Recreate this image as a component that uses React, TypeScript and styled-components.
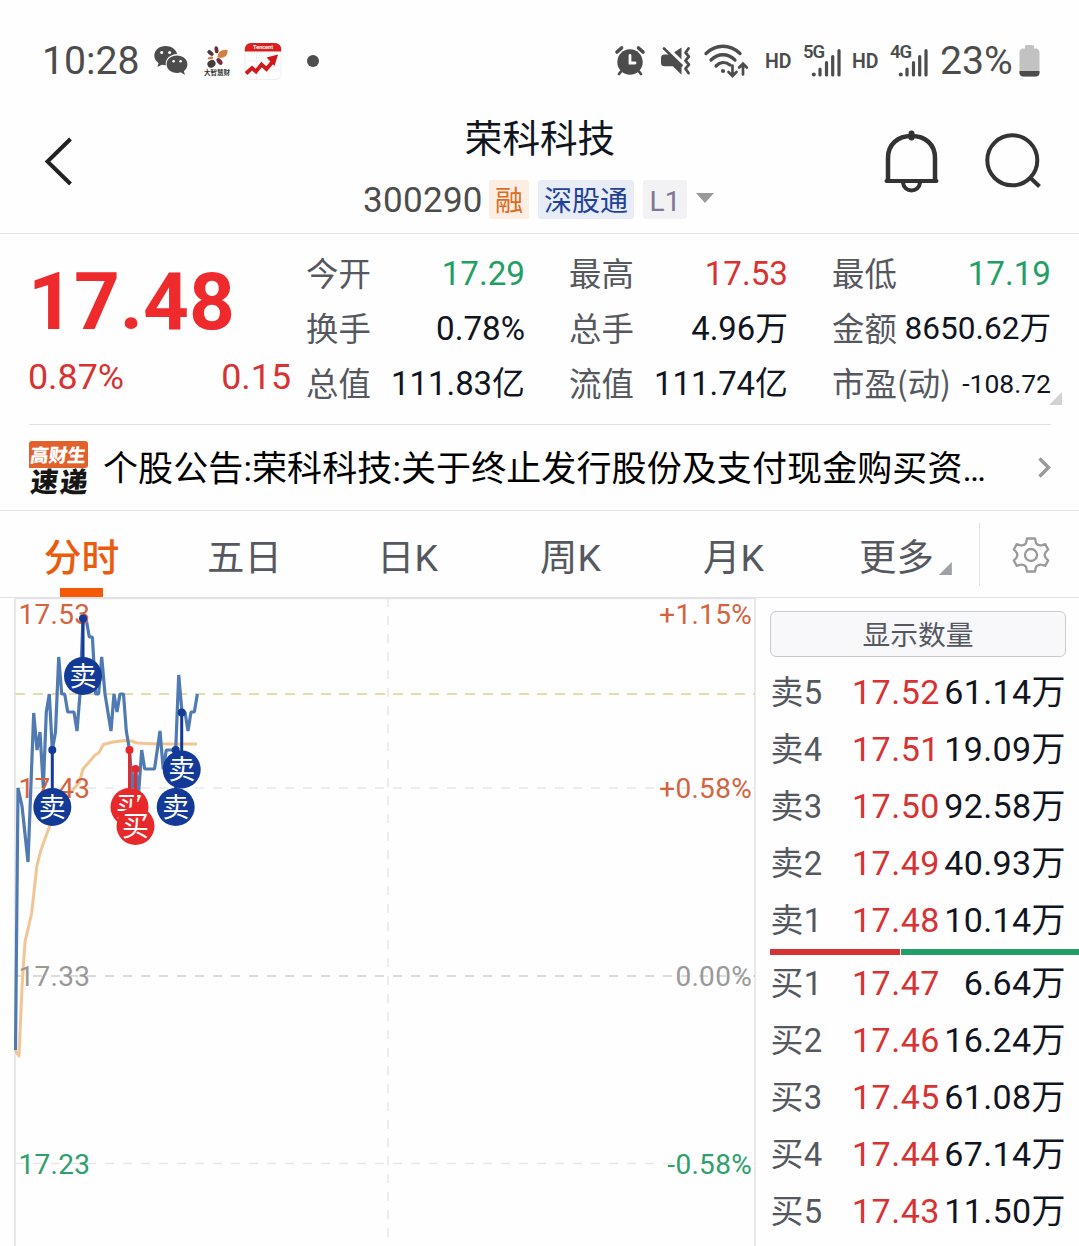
import React from "react";
import styled, { createGlobalStyle } from "styled-components";

const RED = "#d83232";
const BIG_RED = "#ee2a2c";
const GREEN = "#22a064";
const INK = "#10151f";
const GREY = "#55585f";
const LINE = "#e2e2e4";

const Global = createGlobalStyle`
  * { box-sizing: border-box; }
  body {
    margin: 0;
    background: #fefefe;
    font-family: Roboto, "Noto Sans CJK SC", sans-serif;
    color: ${INK};
  }
`;

const Screen = styled.div`
  width: 1079px;
  height: 1246px;
  overflow: hidden;
  display: flex;
  flex-direction: column;
`;

/* ---------- status bar ---------- */

const StatusBar = styled.div`
  height: 105px;
  flex: none;
  padding: 17px 39px 0 42px;
  display: flex;
  justify-content: space-between;
  align-items: center;
  color: #4c4c4c;
`;

const StatusGroup = styled.div`
  display: flex;
  align-items: center;
`;

const StatusText = styled.span<{ $w: number }>`
  width: ${(p) => p.$w}px;
  font-size: 39.2px;
  line-height: 44px;
  white-space: nowrap;
`;

const Hd = styled.span<{ $w: number }>`
  width: ${(p) => p.$w}px;
  padding-top: 1px;
  font-size: 19.5px;
  font-weight: 600;
  line-height: 22px;
`;

const Icon = styled.svg<{ $gap?: number }>`
  display: block;
  flex: none;
  overflow: visible;
  margin-right: ${(p) => p.$gap ?? 0}px;
`;

function WeChat() {
  return (
    <Icon $gap={16} width="34" height="32" viewBox="0 0 34 32" fill="#4c4c4c">
      <path d="M11.5 1C5.2 1 .3 5.200.3 10.600c0 3 1.600 5.700 4.200 7.500l-1 4 4.400-2.300c1.200.3 2.500.5 3.900.5-.9-6 4.200-11.200 11.400-11.200C22 4.400 17.400 1 11.500 1z" />
      <path d="M23 10.500c-5.800 0-10.400 3.800-10.400 8.700s4.600 8.700 10.400 8.700c1.300 0 2.600-.2 3.700-.6l4.200 2.700-1-3.900c2.100-1.600 3.500-4 3.500-6.900 0-4.900-4.600-8.700-10.400-8.700z" />
      <g fill="#fefefe">
        <circle cx="7.700" cy="7.500" r="1.500" />
        <circle cx="15.600" cy="7.500" r="1.500" />
        <circle cx="19.600" cy="16.300" r="1.300" />
        <circle cx="26.600" cy="16.300" r="1.300" />
      </g>
    </Icon>
  );
}

function Flower() {
  return (
    <Icon $gap={14} width="26" height="30" viewBox="0 0 26 30">
      <ellipse cx="12.500" cy="3.800" rx="1.900" ry="3.600" transform="rotate(-10 12.500 3.800)" fill="#6b2a38" />
      <ellipse cx="6.500" cy="7" rx="3.600" ry="2" transform="rotate(40 6.500 7)" fill="#4a3a3a" />
      <path d="M13.500 11.500C13.500 6 18 3 23.500 4c.5 5.500-3 9-10 7.500z" fill="#d08040" />
      <ellipse cx="6.500" cy="12" rx="2.900" ry="1.400" transform="rotate(-12 6.500 12)" fill="#d08040" />
      <ellipse cx="15.500" cy="15.500" rx="3.800" ry="2.300" transform="rotate(50 15.500 15.500)" fill="#7b2a3c" />
      <ellipse cx="7.500" cy="17.800" rx="4.200" ry="3.600" transform="rotate(-30 7.500 17.800)" fill="#443d3d" />
      <text x="0" y="29" fontSize="6.500" fontWeight="700" fill="#333" fontFamily='"Noto Sans CJK SC", sans-serif'>
        大智慧财
      </text>
    </Icon>
  );
}

function TencentStock() {
  return (
    <Icon $gap={25} width="38" height="38" viewBox="0 0 38 38">
      <rect x="1" y="1.500" width="36" height="36" rx="6" fill="#fff" stroke="#eee" />
      <path d="M12.500 10v27M25 10v27M1 19h36M1 28h36" stroke="#f1f1f1" />
      <path d="M.8 9.500V7a6 6 0 0 1 6-6h24.400a6 6 0 0 1 6 6v2.500z" fill="#d9201d" />
      <text x="19" y="7.400" fontSize="5.500" fontWeight="700" textAnchor="middle" fill="#fff">Tencent</text>
      <path d="M2 31.500l6-5.500 4 3.500 5.500-7 5 4.500 8-9.500" fill="none" stroke="#cf1a1a" strokeWidth="3.800" />
      <path d="M22.500 15.500l11.500-3-3.500 11.500z" fill="#cf1a1a" />
    </Icon>
  );
}

const Dot = styled.i`
  width: 12px;
  height: 12px;
  border-radius: 50%;
  background: #4c4c4c;
`;

function Alarm() {
  return (
    <Icon $gap={16} width="30" height="30" viewBox="0 0 30 30" fill="none" stroke="#4c4c4c" strokeLinecap="round">
      <circle cx="15" cy="16" r="12.700" fill="#4c4c4c" stroke="none" />
      <path d="M2 6l4.500-4M28 6l-4.500-4" strokeWidth="3.600" />
      <path d="M6 25.500l-2 2.500M24 25.500l2 2.500" strokeWidth="2.800" />
      <path d="M15 9.500v7.500h5" stroke="#fefefe" strokeWidth="2.800" />
    </Icon>
  );
}

function Mute() {
  return (
    <Icon $gap={12} width="31" height="32" viewBox="0 0 31 32" fill="#4c4c4c">
      <path d="M20.500 2.500v12l-7.300-7.200z" />
      <path d="M3.500 9.500h5l12 12v8.300l-8.500-8.500H3.500A3.500 3.500 0 0 1 0 18v-5a3.500 3.500 0 0 1 3.500-3.500z" />
      <path d="M3 3.500l17.500 17" stroke="#4c4c4c" strokeWidth="2.600" strokeLinecap="round" />
      <path d="M27.500 3.500l-3 4.200 3.400 4-3.400 4 3.400 4-3.400 4 3 4.300" fill="none" stroke="#4c4c4c" strokeWidth="2.800" strokeLinejoin="round" strokeLinecap="round" />
    </Icon>
  );
}

function Wifi() {
  return (
    <Icon $gap={17} width="44" height="36" viewBox="0 0 44 36" fill="none" stroke="#4c4c4c" strokeWidth="3.300" strokeLinecap="round">
      <path d="M2 10.500C12 .8 26 .8 36 10.500" />
      <path d="M7 17c7-7 17-7 24 0" />
      <path d="M12 23c4-4 9.500-4.500 14-1" />
      <circle cx="19" cy="28" r="2.100" fill="#4c4c4c" stroke="none" />
      <path d="M28.500 22.500v10M24.500 29l4 4 4-4M39 31.500v-10M35.200 24.500l3.800-3.800 3.800 3.800" strokeWidth="2.700" />
    </Icon>
  );
}

function Signal({ label, gap }: { label: string; gap: number }) {
  return (
    <Icon $gap={gap} width="38" height="34" viewBox="0 0 38 34">
      <text x="0" y="14" fontSize="18.500" fontWeight="600" fill="#4c4c4c" textLength="22">{label}</text>
      <path d="M17 31v-6M23.500 31v-12.500M29.700 31v-18.500M36 31v-24.500" stroke="#4c4c4c" strokeWidth="3.200" strokeLinecap="round" />
      <circle cx="10.800" cy="30.500" r="2" fill="#4c4c4c" />
    </Icon>
  );
}

function Battery() {
  return (
    <Icon width="21" height="32" viewBox="0 0 21 32">
      <path d="M6 1.500q0-1.500 1.500-1.500h6q1.500 0 1.500 1.500V3.500h2.500Q20.500 4 20.500 8v19.500q0 4-4 4h-12q-4 0-4-4V8q0-4 3-4.500H6z" fill="#c2c2c2" />
      <path d="M.5 26h20v1.500q0 4-4 4h-12q-4 0-4-4z" fill="#4c4c4c" />
    </Icon>
  );
}

/* ---------- header ---------- */

const Header = styled.header`
  height: 129px;
  flex: none;
  display: flex;
  justify-content: space-between;
  border-bottom: 1px solid ${LINE};
`;

const HeaderSide = styled.div<{ $end?: boolean }>`
  width: 240px;
  padding: ${(p) => (p.$end ? "24px 37px 0 0" : "31px 0 0 43px")};
  display: flex;
  align-items: flex-start;
  justify-content: ${(p) => (p.$end ? "flex-end" : "flex-start")};
`;

const Titles = styled.div`
  padding-top: 6px;
  display: flex;
  flex-direction: column;
  align-items: center;
  gap: 12px;
`;

const StockName = styled.h1`
  margin: 0;
  padding-left: 1px;
  font-size: 37.6px;
  line-height: 56px;
  font-weight: 400;
`;

const CodeRow = styled.div`
  height: 40px;
  margin-right: 2px;
  display: flex;
  align-items: center;
  gap: 9px;
`;

const Code = styled.span`
  width: 117px;
  padding-top: 3px;
  font-size: 35px;
  line-height: 40px;
  letter-spacing: 0.3px;
  color: #4c4c4c;
`;

const Tag = styled.span<{ $bg: string; $fg: string; $w: number }>`
  width: ${(p) => p.$w}px;
  height: 39px;
  border-radius: 3px;
  font-size: 28px;
  line-height: 43px;
  text-align: center;
  color: ${(p) => p.$fg};
  background: ${(p) => p.$bg};
`;

const Caret = styled.i`
  border: 9px solid transparent;
  border-top: 10px solid #999;
  border-bottom: 0;
  margin-top: -3px;
`;

/* ---------- quote ---------- */

const Quote = styled.section`
  height: 191px;
  flex: none;
  margin: 0 28px 0 29px;
  border-bottom: 1px solid ${LINE};
  display: flex;
  gap: 15px;
  position: relative;
`;

const PriceBlock = styled.div`
  width: 263px;
  padding-top: 23px;
`;

const Price = styled.div`
  margin-left: -1px;
  font-size: 80px;
  line-height: 90px;
  font-weight: 700;
  color: ${BIG_RED};
`;

const Change = styled.div`
  display: flex;
  justify-content: space-between;
  margin: 8px 0 0 -1px;
  font-size: 35.8px;
  line-height: 44px;
  color: ${RED};
`;

const Stats = styled.div`
  flex: 1;
  padding-top: 12px;
  display: grid;
  grid-template-columns: repeat(3, 219px);
  grid-auto-rows: 55px;
  column-gap: 44px;
`;

const Stat = styled.div`
  display: flex;
  justify-content: space-between;
  align-items: center;
  white-space: nowrap;
  line-height: 54px;
`;

const StatLabel = styled.span`
  padding-bottom: 4px;
  font-family: "Noto Sans CJK SC", sans-serif;
  font-size: 32.4px;
  line-height: 50px;
  color: ${GREY};
`;

const StatValue = styled.b<{ $tone?: string; $size?: number }>`
  font-weight: 400;
  font-size: ${(p) => p.$size ?? 33.2}px;
  color: ${(p) => p.$tone ?? INK};
`;

const Corner = styled.i<{ $size: number; $color: string }>`
  width: ${(p) => p.$size}px;
  height: ${(p) => p.$size}px;
  background: ${(p) => p.$color};
  clip-path: polygon(100% 0, 100% 100%, 0 100%);
`;

const QuoteCorner = styled(Corner)`
  position: absolute;
  right: -11px;
  bottom: 19px;
`;

const stats: { label: string; value: string; tone?: string; size?: number }[] = [
  { label: "今开", value: "17.29", tone: GREEN },
  { label: "最高", value: "17.53", tone: RED },
  { label: "最低", value: "17.19", tone: GREEN },
  { label: "换手", value: "0.78%" },
  { label: "总手", value: "4.96万", size: 32.8 },
  { label: "金额", value: "8650.62万", size: 31.6 },
  { label: "总值", value: "111.83亿", size: 32.9 },
  { label: "流值", value: "111.74亿", size: 32.9 },
  { label: "市盈(动)", value: "-108.72", size: 26.5 },
];

/* ---------- news ---------- */

const News = styled.section`
  height: 86px;
  flex: none;
  padding: 0 28px 0 29px;
  border-bottom: 1px solid ${LINE};
  display: flex;
  align-items: center;
`;

const NewsLogo = styled.div`
  width: 59px;
  height: 54px;
  margin-right: 15px;
  font-family: "Noto Sans CJK SC", sans-serif;
  font-weight: 900;
`;

const LogoTop = styled.div`
  height: 27px;
  border-radius: 3px 3px 3px 0;
  background: #e2602c;
  color: #fff;
  font-size: 18.5px;
  line-height: 26px;
  text-align: center;
  span { display: block; transform: skewX(-8deg); }
`;

const LogoBottom = styled.div`
  color: #161616;
  font-size: 27.5px;
  line-height: 25px;
  display: flex;
  justify-content: space-between;
  padding-left: 2px;
  transform: skewX(-6deg);
`;

const Headline = styled.p`
  flex: 1;
  margin: 0;
  padding-top: 5px;
  font-size: 35px;
  line-height: 50px;
  letter-spacing: 0.1px;
  color: #000;
  white-space: nowrap;
`;

/* ---------- tabs ---------- */

const Tabs = styled.nav`
  height: 87px;
  flex: none;
  display: flex;
  align-items: center;
  border-bottom: 1px solid ${LINE};
`;

const Tab = styled.div<{ $active?: boolean }>`
  width: 163px;
  flex: none;
  height: 86px;
  display: flex;
  flex-direction: column;
  align-items: center;
  font-size: ${(p) => (p.$active ? 37.8 : 37.4)}px;
  line-height: ${(p) => (p.$active ? 94 : 95)}px;
  font-weight: ${(p) => (p.$active ? 500 : 400)};
  color: ${(p) => (p.$active ? "#ea5c0c" : GREY)};
  &::after {
    content: "";
    width: 43px;
    height: 9px;
    flex: none;
    margin-top: -17px;
    background: ${(p) => (p.$active ? "#f45a06" : "transparent")};
  }
`;

const MoreLabel = styled.span`
  position: relative;
`;

const MoreCorner = styled(Corner)`
  position: absolute;
  right: -18px;
  bottom: 31px;
`;

const TabDivider = styled.i`
  width: 1px;
  height: 63px;
  margin: 0 33px 0 1px;
  background: ${LINE};
`;

/* ---------- chart and order book ---------- */

const Main = styled.main`
  flex: 1;
  display: flex;
  padding-left: 14px;
`;

const Plot = styled.svg`
  display: block;
  flex: none;
`;

const Book = styled.aside`
  flex: 1;
  padding: 13px 0 0 14px;
`;

const AmountButton = styled.button`
  display: block;
  width: 296px;
  height: 46px;
  margin: 0 0 7px;
  padding: 3px 0 0;
  border: 1px solid #cacbd0;
  border-radius: 6px;
  background: #f8f8fb;
  color: ${GREY};
  font: 400 27.8px/41px Roboto, "Noto Sans CJK SC", sans-serif;
`;

const Level = styled.div`
  width: 296px;
  height: 57px;
  display: grid;
  grid-template-columns: 82px 1fr auto;
  align-items: start;
  font-size: 34px;
  line-height: 56px;
  letter-spacing: 0.4px;
  white-space: nowrap;
`;

const LevelName = styled.span`
  padding-left: 0.5px;
  font-size: 32.8px;
  line-height: 58px;
  color: ${GREY};
`;

const LevelPrice = styled.span`
  letter-spacing: 0.5px;
  color: ${RED};
`;

const RatioBar = styled.div`
  display: flex;
  gap: 1px;
  height: 6px;
`;

const Ratio = styled.i<{ $buy?: boolean }>`
  ${(p) => (p.$buy ? "width: 130px;" : "flex: 1;")}
  background: ${(p) => (p.$buy ? "#d43234" : "#229f68")};
`;

const asks = [
  ["卖5", "17.52", "61.14万"],
  ["卖4", "17.51", "19.09万"],
  ["卖3", "17.50", "92.58万"],
  ["卖2", "17.49", "40.93万"],
  ["卖1", "17.48", "10.14万"],
];
const bids = [
  ["买1", "17.47", "6.64万"],
  ["买2", "17.46", "16.24万"],
  ["买3", "17.45", "61.08万"],
  ["买4", "17.44", "67.14万"],
  ["买5", "17.43", "11.50万"],
];

const pricePoints =
  "15.5,1050 18,788 22,806 28,862 33.7,713 37,750 40,732 43.3,788 46.3,712 49.3,694 52.3,750 55.5,732 58.7,657 61.7,694 64.7,694 67.7,712 74,712 77,731 80,694 83,618 86.3,620 89.3,637 92.4,637 95.6,694 98.6,694 101.7,657 105,694 111,731 114,694 117,712 120,694 123.5,694 126.3,731 129.5,750 132.5,788 135.6,769 138.7,792 141.7,750 144.7,769 154.5,769 160,731 163.2,769 166.3,750 175.7,750 178.7,675 182,712 185,712 188,731 191,712 194.3,712 197.4,694";
const averagePoints =
  "15,1050 19,1056 22,987 25,942 31.7,913 36.7,867 40,853 44.5,840 49,828 56,810 64,798 71.7,791 79.5,782 83,769 91.7,759 95,755 98.7,753 103.3,744.5 113,742 125,740.5 131,741 137,743 157,744 197,744";

type Mark = { x: number; y: number; dot: number; side: "卖" | "买" };
const marks: Mark[] = [
  { x: 52.3, y: 807, dot: 750, side: "卖" },
  { x: 83, y: 676, dot: 618.5, side: "卖" },
  { x: 129.5, y: 807, dot: 750, side: "买" },
  { x: 135.5, y: 826, dot: 769, side: "买" },
  { x: 175.7, y: 807, dot: 750, side: "卖" },
  { x: 181.7, y: 769.5, dot: 712.5, side: "卖" },
];

const axis = [
  { y: 624, left: "17.53", right: "+1.15%", color: "#d4633f" },
  { y: 798, left: "17.43", right: "+0.58%", color: "#d4633f" },
  { y: 986, left: "17.33", right: "0.00%", color: "#999" },
  { y: 1174, left: "17.23", right: "-0.58%", color: "#2f9f6c" },
];

function Chart() {
  return (
    <Plot width="742" height="648" viewBox="14 598 742 648" fontSize="28">
      <path d="M15 598v648M755 598v648M15 598.500h740" stroke="#e2e2e6" strokeWidth="1.500" fill="none" />
      <g stroke="#e8e8ea" strokeWidth="1.500" strokeDasharray="9 9">
        <path d="M388 598v648" />
        <path d="M15 788h740M15 1163.500h740" />
      </g>
      <path d="M15 976h740" stroke="#cfcfcf" strokeWidth="1.700" strokeDasharray="9 9" />
      <path d="M15 694h740" stroke="#e3dcab" strokeWidth="2" strokeDasharray="10 8" />
      <polyline points={averagePoints} fill="none" stroke="#f2c594" strokeWidth="3" strokeLinejoin="round" />
      <polyline points={pricePoints} fill="none" stroke="#4f7bb2" strokeWidth="3.200" strokeLinejoin="bevel" />
      {axis.map((a) => (
        <g key={a.left} fill={a.color}>
          <text x="18.500" y={a.y} textLength="71.500">{a.left}</text>
          <text x="752" y={a.y} textAnchor="end" letterSpacing="0.3">{a.right}</text>
        </g>
      ))}
      {marks.map((m) => {
        const color = m.side === "卖" ? "#123a96" : "#e8292c";
        return (
          <g key={`${m.x}`}>
            <path d={`M${m.x} ${m.dot}V${m.y}`} stroke={color} strokeWidth="3" />
            <circle cx={m.x} cy={m.dot} r="4" fill={color} />
            <circle cx={m.x} cy={m.y} r="19" fill={color} />
            <text x={m.x} y={m.y + 9.5} fontSize="27" textAnchor="middle" fill="#fff">{m.side}</text>
          </g>
        );
      })}
    </Plot>
  );
}

function Levels({ rows }: { rows: string[][] }) {
  return (
    <>
      {rows.map(([name, price, amount]) => (
        <Level key={name}>
          <LevelName>{name}</LevelName>
          <LevelPrice>{price}</LevelPrice>
          <span>{amount}</span>
        </Level>
      ))}
    </>
  );
}

export default function App() {
  return (
    <Screen>
      <Global />
      <StatusBar>
        <StatusGroup>
          <StatusText $w={112}>10:28</StatusText>
          <WeChat />
          <Flower />
          <TencentStock />
          <Dot />
        </StatusGroup>
        <StatusGroup>
          <Alarm />
          <Mute />
          <Wifi />
          <Hd $w={38}>HD</Hd>
          <Signal label="5G" gap={11} />
          <Hd $w={38}>HD</Hd>
          <Signal label="4G" gap={12} />
          <StatusText $w={79}>23%</StatusText>
          <Battery />
        </StatusGroup>
      </StatusBar>

      <Header>
        <HeaderSide>
          <Icon width="30" height="52" viewBox="0 0 30 52" fill="none" stroke="#222" strokeWidth="4">
            <path d="M27.500 3L4.500 25.500l23 22.500" />
          </Icon>
        </HeaderSide>
        <Titles>
          <StockName>荣科科技</StockName>
          <CodeRow>
            <Code>300290</Code>
            <Tag $w={40} $bg="#fdeee4" $fg="#e06c22">融</Tag>
            <Tag $w={96} $bg="#e7ecf6" $fg="#1f4296">深股通</Tag>
            <Tag $w={44} $bg="#f2f2f5" $fg="#7d7696">L1</Tag>
            <Caret />
          </CodeRow>
        </Titles>
        <HeaderSide $end>
          <Icon $gap={45} width="56" height="66" viewBox="0 0 56 66" fill="none" stroke="#333" strokeWidth="4.500" strokeLinecap="round">
            <path d="M5 51V29C5 15 15 7 28.500 7S52 15 52 29v22" />
            <path d="M3.500 52h50" strokeWidth="4" />
            <path d="M28.500 4.500v4" strokeWidth="6" />
            <path d="M20 53.500c1 10.500 16 10.500 17 0" strokeWidth="4" />
          </Icon>
          <Icon width="58" height="62" viewBox="0 0 58 62" fill="none" stroke="#333" strokeWidth="4">
            <circle cx="28.300" cy="31.300" r="25" />
            <path d="M46 48.500l9.500 9" />
          </Icon>
        </HeaderSide>
      </Header>

      <Quote>
        <PriceBlock>
          <Price>17.48</Price>
          <Change>
            <span>0.87%</span>
            <span>0.15</span>
          </Change>
        </PriceBlock>
        <Stats>
          {stats.map((s) => (
            <Stat key={s.label}>
              <StatLabel>{s.label}</StatLabel>
              <StatValue $tone={s.tone} $size={s.size}>{s.value}</StatValue>
            </Stat>
          ))}
        </Stats>
        <QuoteCorner $size={13} $color="#d0d1d4" />
      </Quote>

      <News>
        <NewsLogo>
          <LogoTop><span>高财生</span></LogoTop>
          <LogoBottom><span>速</span><span>递</span></LogoBottom>
        </NewsLogo>
        <Headline>个股公告:荣科科技:关于终止发行股份及支付现金购买资…</Headline>
        <Icon width="14" height="22" viewBox="0 0 14 22" fill="none" stroke="#9a9a9a" strokeWidth="3.500">
          <path d="M2.500 1.500l9 9-9 9" />
        </Icon>
      </News>

      <Tabs>
        <Tab $active>分时</Tab>
        <Tab>五日</Tab>
        <Tab>日K</Tab>
        <Tab>周K</Tab>
        <Tab>月K</Tab>
        <Tab>
          <MoreLabel>更多<MoreCorner $size={13} $color="#9fa1a6" /></MoreLabel>
        </Tab>
        <TabDivider />
        <Icon width="36" height="38" viewBox="0 -1 36 38" fill="none" stroke="#999" strokeWidth="2.300" strokeLinejoin="round">
          <path d="M14 2.500h8l1 4.700q2.500 3.200 6.500 1.800l2.700-.9 3 5.400-2.200 2.200q-2.600 3.300 0 6.600l2.200 2.200-3 5.400-2.700-.9q-4-1.400-6.500 1.800l-1 4.700h-8l-1-4.700q-2.500-3.200-6.500-1.800l-2.700.9-3-5.400 2.200-2.200q2.600-3.300 0-6.600l-2.200-2.200 3-5.400 2.700.9q4 1.400 6.500-1.800z" />
          <circle cx="18" cy="19" r="6" />
        </Icon>
      </Tabs>

      <Main>
        <Chart />
        <Book>
          <AmountButton>显示数量</AmountButton>
          <Levels rows={asks} />
          <RatioBar>
            <Ratio $buy />
            <Ratio />
          </RatioBar>
          <Levels rows={bids} />
        </Book>
      </Main>
    </Screen>
  );
}
